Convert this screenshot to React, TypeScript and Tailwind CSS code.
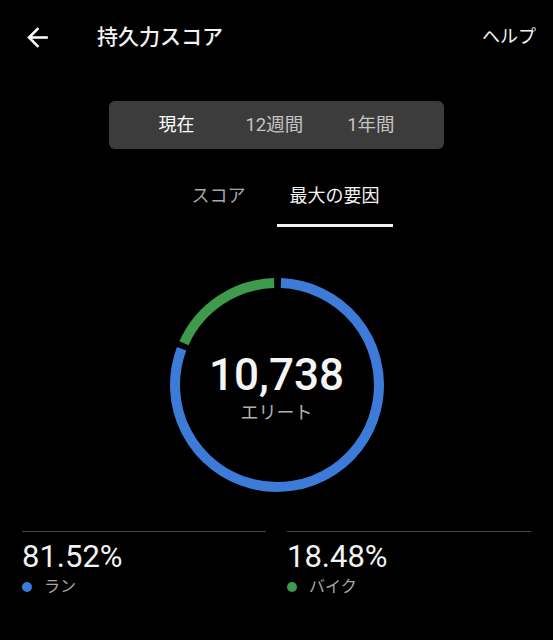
import React from "react";

const CX = 108;
const CY = 108;
const R = 102;

function pt(deg: number) {
  const a = (deg * Math.PI) / 180;
  return [CX + R * Math.sin(a), CY - R * Math.cos(a)];
}

function arc(from: number, to: number) {
  const [x1, y1] = pt(from);
  const [x2, y2] = pt(to);
  const large = to - from > 180 ? 1 : 0;
  return `M ${x1.toFixed(2)} ${y1.toFixed(2)} A ${R} ${R} 0 ${large} 1 ${x2.toFixed(2)} ${y2.toFixed(2)}`;
}

export default function App() {
  return (
    <div
      className="w-[553px] h-[640px] bg-black text-white overflow-hidden"
      style={{ fontFamily: 'Roboto, "Noto Sans CJK JP", sans-serif' }}
    >
      {/* Header */}
      <div className="flex items-center h-[74px]">
        <svg
          className="ml-[22px]"
          width="31"
          height="31"
          viewBox="0 0 24 24"
          fill="#ffffff"
        >
          <path d="M20 11H7.83l5.59-5.59L12 4l-8 8 8 8 1.41-1.41L7.83 13H20v-2z" />
        </svg>
        <div className="ml-[44px] text-[21px] leading-[28px] font-medium text-[#f2f2f2]">
          持久力スコア
        </div>
        <div className="ml-auto mr-[17px] text-[18px] leading-[24px] text-[#f2f2f2]">
          ヘルプ
        </div>
      </div>

      {/* Segmented control */}
      <div className="mt-[27px] mx-auto w-[335px] h-[48px] rounded-[6px] bg-[#3c3c3c] flex items-center justify-center text-[18px] leading-[24px]">
        <span className="text-white">現在</span>
        <span className="ml-[51px] text-[#c4c4c4] text-[18.5px]">12週間</span>
        <span className="ml-[44px] text-[#c4c4c4] text-[18.5px]">1年間</span>
      </div>

      {/* Tabs */}
      <div className="mt-[35px] flex justify-center text-[18px] leading-[24px]">
        <div className="w-[116px] flex flex-col items-center">
          <span className="text-[#a8a8a8]">スコア</span>
          <div className="mt-[16px] h-[3px] w-full bg-transparent" />
        </div>
        <div className="w-[116px] flex flex-col items-center">
          <span className="text-[#f2f2f2]">最大の要因</span>
          <div className="mt-[16px] h-[3px] w-full bg-[#f2f2f2]" />
        </div>
      </div>

      {/* Ring */}
      <div className="mt-[50px] mx-auto w-[216px] h-[216px] relative">
        <svg className="absolute inset-0" width="216" height="216" viewBox="0 0 216 216">
          <path d={arc(2.2, 290.8)} fill="none" stroke="#3d7bd9" strokeWidth="10" />
          <path d={arc(294.2, 358.4)} fill="none" stroke="#3e9b4c" strokeWidth="10" />
        </svg>
        <div className="absolute inset-0 flex flex-col items-center pt-[76px]">
          <div className="text-[44px] leading-[44px] font-medium text-[#f5f5f5]">
            10,738
          </div>
          <div className="mt-[4px] text-[18px] leading-[24px] text-[#b0b0b0]">
            エリート
          </div>
        </div>
      </div>

      {/* Bottom stats */}
      <div className="mt-[38px] flex gap-[21px] px-[22px]">
        <div className="w-[244px] border-t border-[#444444] pt-[6px]">
          <div className="text-[31px] leading-[37px] text-[#f2f2f2]">81.52%</div>
          <div className="flex items-center h-[24px]">
            <span className="w-[10px] h-[10px] rounded-full bg-[#3d7bd9]" />
            <span className="ml-[12px] text-[16px] leading-[24px] text-[#a8a8a8]">ラン</span>
          </div>
        </div>
        <div className="w-[244px] border-t border-[#444444] pt-[6px]">
          <div className="text-[31px] leading-[37px] text-[#f2f2f2]">18.48%</div>
          <div className="flex items-center h-[24px]">
            <span className="w-[10px] h-[10px] rounded-full bg-[#3e9b4c]" />
            <span className="ml-[12px] text-[16px] leading-[24px] text-[#a8a8a8]">バイク</span>
          </div>
        </div>
      </div>
    </div>
  );
}
